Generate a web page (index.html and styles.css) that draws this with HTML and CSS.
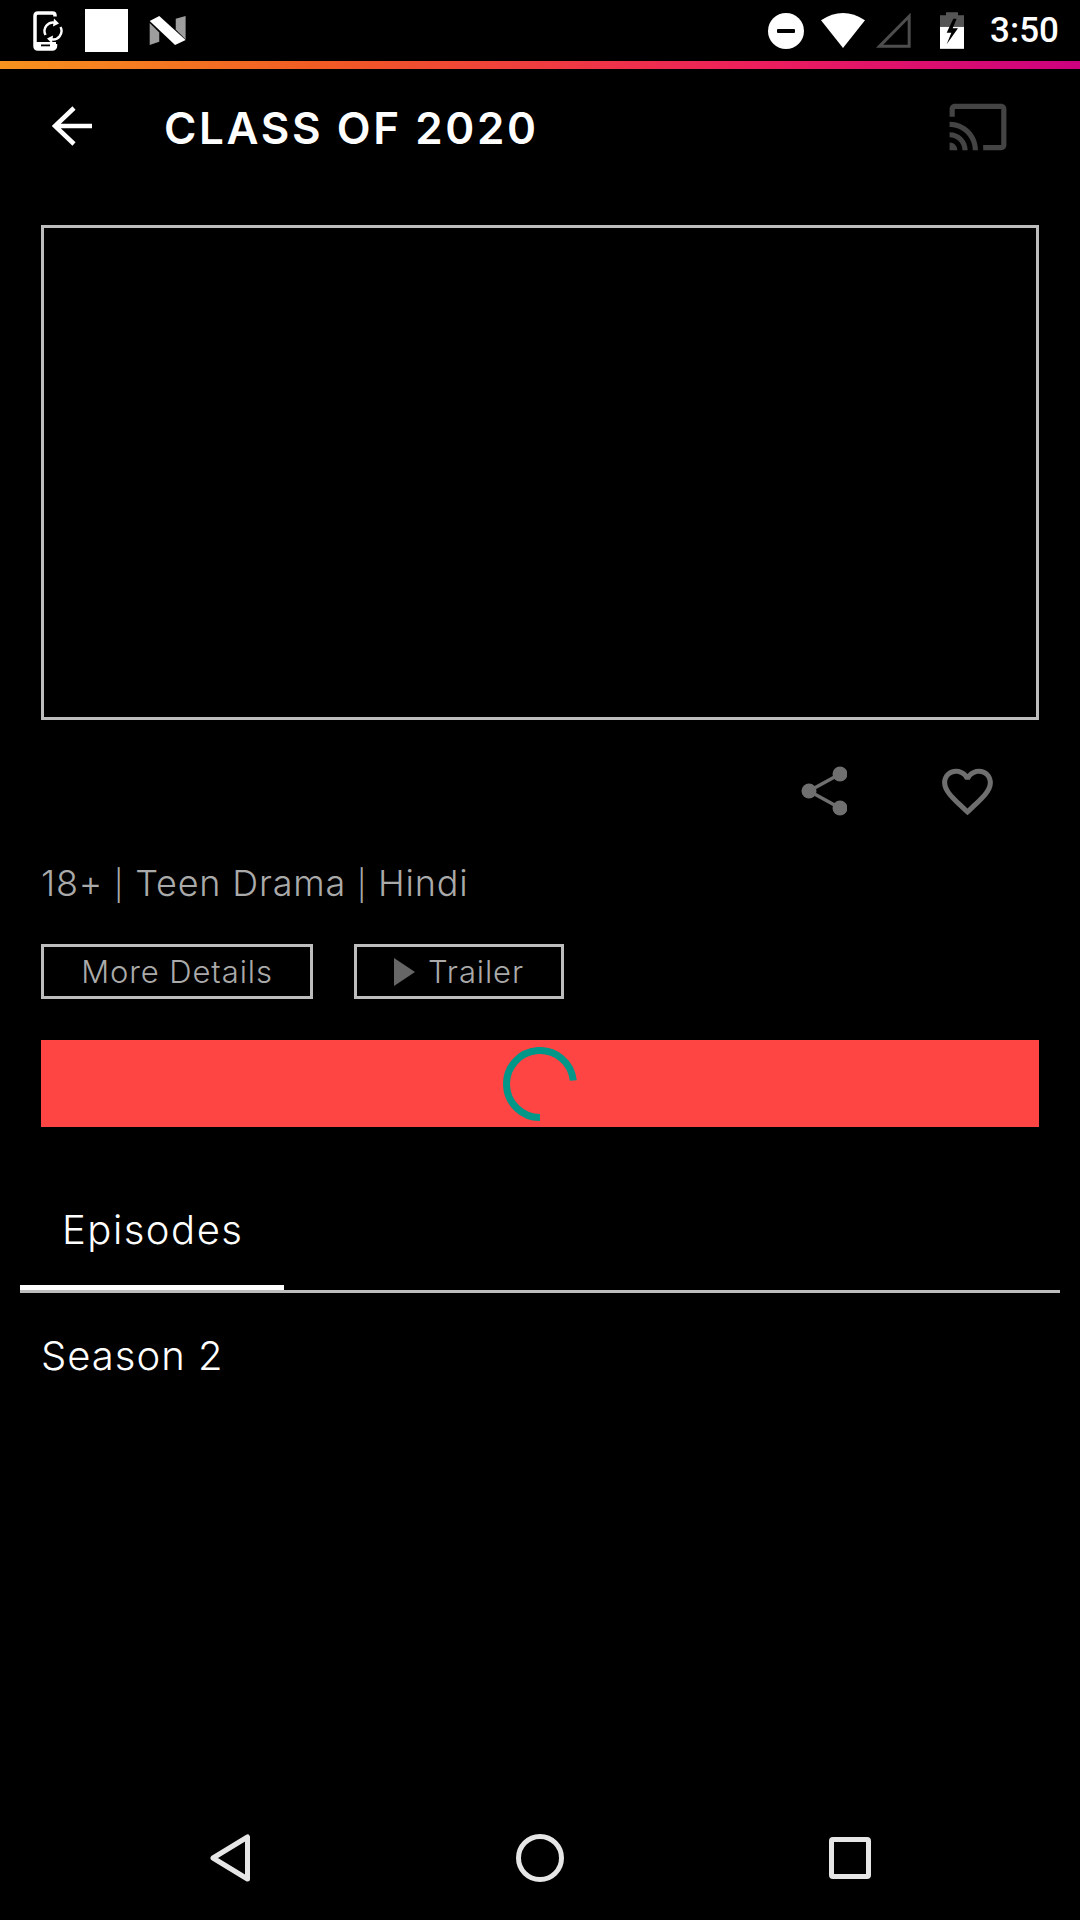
FILE: index.html

```html
<!doctype html>
<html lang="en">
<head>
    <meta charset="utf-8">
    <meta name="viewport" content="width=device-width, initial-scale=1, shrink-to-fit=no">
    <link rel="stylesheet" href="styles.css">
    <title>Class of 2020</title>
</head>
<body>
<header class="status">
    <div class="status-left">
        <svg class="ic-phone" viewBox="0 0 30 40">
            <path d="M22 5.500V4.500C22 3 21 2 19.500 2H5C3 2 2 3 2 5V35C2 37 3 38 5 38H19.500C21 38 22.500 37 22.500 35V33" fill="none" stroke="#fff" stroke-width="3.500"/>
            <path d="M3 31H23V38H3Z" fill="#fff"/>
            <rect x="8" y="33.500" width="9" height="1.800" fill="#000"/>
            <path d="M12.500 24A8.500 8.500 0 0 1 22 11.800" fill="none" stroke="#fff" stroke-width="2.400"/>
            <path d="M21 7.500L26 12.500L20 15.500Z" fill="#fff"/>
            <path d="M27.500 16A8.500 8.500 0 0 1 18 28.200" fill="none" stroke="#fff" stroke-width="2.400"/>
            <path d="M19 32.500L14 27.500L20 24.500Z" fill="#fff"/>
        </svg>
        <div class="ic-square"></div>
        <svg class="ic-nougat" viewBox="447 47 110 88">
            <path d="M448 68L477 97V125L448 135Z" fill="#9e9e9e"/>
            <path d="M527 55L557 47V118L527 88Z" fill="#9e9e9e"/>
            <path d="M448 62L477 47L557 120L525 135Z" fill="#fff"/>
        </svg>
    </div>
    <div class="status-right">
        <svg class="ic-dnd" viewBox="0 0 36 36">
            <circle cx="18" cy="18" r="18" fill="#fff"/>
            <rect x="9" y="16" width="18" height="4" rx="1" fill="#000"/>
        </svg>
        <svg class="ic-wifi" viewBox="243 38 132 105">
            <path d="M243 60Q309 16 375 60L309 143Z" fill="#fff"/>
        </svg>
        <svg class="ic-signal" viewBox="405 40 108 106">
            <path d="M508 50V141H418Z" fill="none" stroke="#4d4d4d" stroke-width="9"/>
        </svg>
        <svg class="ic-battery" viewBox="600 36 72 110">
            <path d="M618 36H654V45H672V80H600V45H618Z" fill="#555"/>
            <path d="M600 80H672V146H600Z" fill="#fff"/>
            <path d="M640 56L620 98H634L620 132L654 84H638L650 56Z" fill="#000"/>
        </svg>
        <span class="clock">3:50</span>
    </div>
</header>
<div class="rainbow"></div>

<nav class="toolbar">
    <svg class="ic-back" viewBox="0 0 40 40">
        <path d="M22 2L3 20L22 38M3 20H40" fill="none" stroke="#fff" stroke-width="4.500"/>
    </svg>
    <h1 class="title">CLASS OF 2020</h1>
    <svg class="ic-cast" viewBox="0 0 24 24">
        <path d="M21 3H3c-1.100 0-2 .9-2 2v3h2V5h18v14h-7v2h7c1.100 0 2-.9 2-2V5c0-1.100-.9-2-2-2zM1 18v3h3c0-1.660-1.340-3-3-3zm0-4v2c2.760 0 5 2.240 5 5h2c0-3.870-3.130-7-7-7zm0-4v2c4.970 0 9 4.030 9 9h2c0-6.080-4.930-11-11-11z" fill="#444"/>
    </svg>
</nav>

<main class="content">
    <div class="video"></div>

    <div class="actions">
        <svg class="ic-share" viewBox="0 0 46 50">
            <path d="M8 25L39 8M8 25L39 42" fill="none" stroke="#6f6f6f" stroke-width="3.500"/>
            <circle cx="8" cy="25" r="7.500" fill="#6f6f6f"/>
            <circle cx="39" cy="8" r="7.500" fill="#6f6f6f"/>
            <circle cx="39" cy="42" r="7.500" fill="#6f6f6f"/>
        </svg>
        <svg class="ic-heart" viewBox="0 0 24 24">
            <path d="M16.500 3c-1.740 0-3.410.81-4.500 2.090C10.910 3.810 9.240 3 7.500 3 4.420 3 2 5.420 2 8.500c0 3.780 3.400 6.860 8.550 11.540L12 21.350l1.450-1.320C18.600 15.360 22 12.280 22 8.500 22 5.420 19.580 3 16.500 3zm-4.400 15.550l-.1.100-.1-.1C7.140 14.240 4 11.390 4 8.500 4 6.500 5.500 5 7.500 5c1.540 0 3.040.99 3.570 2.360h1.870C13.460 5.990 14.960 5 16.500 5c2 0 3.500 1.500 3.500 3.500 0 2.890-3.140 5.740-7.900 10.050z" fill="#6f6f6f"/>
        </svg>
    </div>

    <p class="meta">18+ <span class="sep">|</span> Teen Drama <span class="sep">|</span> Hindi</p>

    <div class="buttons">
        <div class="btn btn-details">More Details</div>
        <div class="btn btn-trailer">
            <svg class="ic-play" viewBox="0 0 21 28">
                <path d="M0 0L21 14L0 28Z" fill="#666"/>
            </svg>
            Trailer
        </div>
    </div>

    <div class="watch">
        <svg class="spinner" viewBox="0 0 74 74">
            <path d="M37 70.500A33.500 33.500 0 1 1 70.300 33.500" fill="none" stroke="#009688" stroke-width="7"/>
        </svg>
    </div>
</main>

<div class="tabs">
    <div class="tab">Episodes</div>
</div>
<p class="season">Season 2</p>

<footer class="navbar">
    <svg class="ic-nav-back" viewBox="0 0 40 48">
        <path d="M37.500 3V45L3 24Z" fill="none" stroke="#e6e6e6" stroke-width="5" stroke-linejoin="round"/>
    </svg>
    <svg class="ic-nav-home" viewBox="0 0 48 48">
        <circle cx="24" cy="24" r="21.500" fill="none" stroke="#e6e6e6" stroke-width="5"/>
    </svg>
    <svg class="ic-nav-recent" viewBox="0 0 42 42">
        <rect x="2.500" y="2.500" width="37" height="37" rx="1.500" fill="none" stroke="#e6e6e6" stroke-width="5"/>
    </svg>
</footer>
</body>
</html>
```

FILE: styles.css

```css
html, body {
    background-color: #000;
    color: #fff;
    font-family: "Inter", "Liberation Sans", sans-serif;
    margin: 0;
}

* {
    box-sizing: border-box;
}

svg {
    display: block;
    flex: none;
}

body {
    display: flex;
    flex-direction: column;
    width: 1080px;
    height: 1920px;
    overflow: hidden;
}

/* status bar */
.status {
    display: flex;
    align-items: center;
    justify-content: space-between;
    height: 61px;
    padding: 0 21px 0 33px;
}

.status-left, .status-right {
    display: flex;
    align-items: center;
}

.ic-phone {
    width: 30px;
    height: 40px;
}

.ic-square {
    width: 43px;
    height: 43px;
    margin-left: 22px;
    background-color: #fff;
}

.ic-nougat {
    width: 37px;
    height: 29px;
    margin-left: 21px;
}

.ic-dnd {
    width: 36px;
    height: 36px;
}

.ic-wifi {
    width: 44px;
    height: 35px;
    margin-left: 17px;
}

.ic-signal {
    width: 36px;
    height: 35px;
    margin-left: 10px;
}

.ic-battery {
    width: 24px;
    height: 37px;
    margin-left: 29px;
}

.clock {
    margin-left: 26px;
    font-family: "Roboto", sans-serif;
    font-size: 35px;
    font-weight: 500;
    line-height: 1;
}

.rainbow {
    height: 8px;
    background: linear-gradient(to right, #f7931e, #f15a24 30%, #ed1e5c 70%, #cc007f);
}

/* toolbar */
.toolbar {
    display: flex;
    align-items: center;
    height: 114px;
    padding: 0 71px 0 52px;
}

.ic-back {
    width: 40px;
    height: 40px;
}

.title {
    flex: 1;
    margin: 4px 0 0 72px;
    font-size: 44px;
    font-weight: 600;
    letter-spacing: 2.600px;
    line-height: 1;
}

.ic-cast {
    width: 62px;
    height: 62px;
    margin-top: 1px;
}

/* main block */
.content {
    display: flex;
    flex-direction: column;
    padding: 42px 41px 0;
}

.video {
    height: 495px;
    border: 3px solid #bdbdbd;
}

.actions {
    display: flex;
    align-items: center;
    justify-content: flex-end;
    height: 143px;
    padding: 0 41px 1px 0;
}

.ic-share {
    width: 46px;
    height: 50px;
    margin-right: 90px;
}

.ic-heart {
    width: 61px;
    height: 61px;
}

.meta {
    margin: 0;
    color: #aaa;
    font-size: 36px;
    font-weight: 300;
    letter-spacing: 0.800px;
    line-height: 40px;
}

.sep {
    font-size: 30px;
    line-height: 1;
}

.buttons {
    display: flex;
    gap: 41px;
    margin-top: 41px;
}

.btn {
    display: flex;
    align-items: center;
    justify-content: center;
    height: 55px;
    border: 3px solid #bdbdbd;
    color: #aaa;
    font-size: 31px;
    font-weight: 300;
    letter-spacing: 0.900px;
}

.btn-details {
    width: 272px;
}

.btn-trailer {
    width: 210px;
}

.ic-play {
    width: 21px;
    height: 28px;
    margin-right: 13px;
}

.watch {
    display: flex;
    align-items: center;
    justify-content: center;
    height: 87px;
    margin-top: 41px;
    background-color: #f44;
}

.spinner {
    width: 74px;
    height: 74px;
}

/* tabs */
.tabs {
    height: 166px;
    margin: 0 20px;
    border-bottom: 3px solid #bdbdbd;
}

.tab {
    width: 264px;
    height: 163px;
    padding: 79px 0 0 42px;
    border-bottom: 5px solid #fff;
    font-size: 40px;
    font-weight: 300;
    letter-spacing: 1.500px;
    line-height: 48px;
}

.season {
    margin: 39px 0 0 41px;
    font-size: 40px;
    font-weight: 300;
    letter-spacing: 1px;
    line-height: 48px;
}

/* android nav */
.navbar {
    display: flex;
    align-items: center;
    justify-content: center;
    height: 124px;
    margin-top: auto;
}

.ic-nav-back {
    width: 40px;
    height: 48px;
    margin-right: 266px;
}

.ic-nav-home {
    width: 48px;
    height: 48px;
}

.ic-nav-recent {
    width: 42px;
    height: 42px;
    margin-left: 265px;
}
```
